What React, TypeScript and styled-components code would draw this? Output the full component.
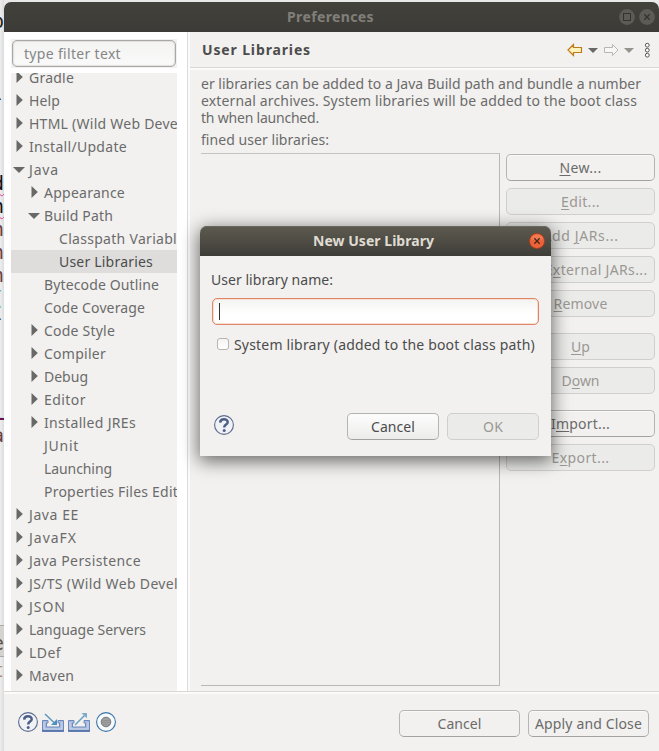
import React, { useLayoutEffect, useRef, useState } from "react";
import styled, { createGlobalStyle, css } from "styled-components";

const Global = createGlobalStyle`
  * { box-sizing: border-box; }
  html, body { margin: 0; background: #e9e9e9; overflow: hidden; }
  body { font: 14px/23px "Noto Sans", sans-serif; color: #6b6b6b; }
  button, input { font: inherit; color: inherit; margin: 0; }
`;

const FitSpan = styled.span`
  display: inline-block;
  white-space: pre;
`;

/* Tracks the text so that it takes exactly the given width. */
function Fit({ w, children }: { w: number; children: React.ReactNode }) {
  const ref = useRef<HTMLSpanElement>(null);
  const [spacing, setSpacing] = useState(0);
  useLayoutEffect(() => {
    const el = ref.current;
    if (!el) return;
    const n = el.textContent?.length ?? 1;
    setSpacing((s) => s + (w - el.getBoundingClientRect().width) / n);
  }, [w]);
  return (
    <FitSpan ref={ref} style={{ letterSpacing: spacing }}>
      {children}
    </FitSpan>
  );
}

const Screen = styled.div`
  position: relative;
  width: 659px;
  height: 751px;
  display: grid;
  grid-template-columns: 4px 655px;
  overflow: hidden;
`;

const Editor = styled.div`
  position: relative;
  overflow: hidden;
  background: linear-gradient(90deg, #eeeeee, #dcdcdc);
`;

const Glyph = styled.span<{ $y: number; $c: string; $wavy?: boolean }>`
  position: absolute;
  right: 0;
  top: ${(p) => p.$y - 12}px;
  font: 19px/24px "DejaVu Sans Mono", monospace;
  color: ${(p) => p.$c};
  ${(p) => p.$wavy && css`text-decoration: underline wavy #e0409a 1px; text-underline-offset: 2px;`}
`;

const Underline = styled.span`
  position: absolute;
  left: 0;
  top: 418px;
  width: 4px;
  height: 2px;
  background: #6d1255;
`;

const TabEdge = styled.span`
  position: absolute;
  left: 0;
  top: 625px;
  width: 4px;
  height: 32px;
  background: #d5d3d0;
  border: solid #aaa;
  border-width: 1px 0;
`;

const Window = styled.main`
  margin-top: 2px;
  height: 749px;
  display: grid;
  grid-template-rows: 30px 659px 60px;
  background: #f2f1ef;
  border-radius: 7px 7px 0 0;
  overflow: hidden;
`;

const TitleBar = styled.header<{ $active?: boolean }>`
  position: relative;
  height: 30px;
  display: flex;
  align-items: center;
  justify-content: center;
  padding: 0 2px 2px 0;
  font-weight: 700;
  ${(p) =>
    p.$active
      ? css`color: #dfdbd2; padding-right: 4px; background: linear-gradient(#5d5b50, #3f3d38); border-radius: 7px 7px 0 0; box-shadow: inset 0 1px #6b695f;`
      : css`color: #817f79; background: linear-gradient(#42413b, #3c3b37);`}
`;

const Controls = styled.div<{ $right: number }>`
  position: absolute;
  right: ${(p) => p.$right}px;
  top: 7px;
  display: flex;
  gap: 4px;
  svg { display: block; }
`;

const Body = styled.div`
  display: grid;
  grid-template-columns: 183px 1px 2px 1fr;
  min-height: 0;
`;

const Sidebar = styled.aside`
  background: #fff;
  padding: 7px 6px 0 7px;
  display: flex;
  flex-direction: column;
  gap: 5px;
  min-width: 0;
  min-height: 0;
`;

const FilterWrap = styled.div`
  background: #f2f1ef;
  height: 29px;
  padding: 1px;
  width: 166px;
`;

const Filter = styled.div`
  height: 27px;
  width: 164px;
  border: 1px solid #aaa8a5;
  border-radius: 5px;
  background: linear-gradient(#f3f3f2, #fafafa);
  box-shadow: inset 0 0 1px 1px #e1e0de;
  padding-left: 11px;
  line-height: 26px;
  color: #868686;
`;

const Tree = styled.div`
  width: 166px;
  flex: 1;
  min-height: 0;
  overflow: hidden;
  background: #f2f1ef;
`;

const Rows = styled.div`
  margin-top: -7px;
`;

const Row = styled.div<{ $depth: number; $selected?: boolean }>`
  height: 23px;
  display: flex;
  align-items: center;
  padding-left: ${(p) => 2 + p.$depth * 15}px;
  white-space: nowrap;
  ${(p) => p.$selected && css`background: #dedddb; color: #4c4c4c;`}
`;

const ArrowBox = styled.span`
  width: 16px;
  height: 23px;
  flex: none;
  svg { display: block; }
`;

const Divider = styled.div`
  background: #dcdbd9;
`;

const Gutter = styled.div`
  background: #fbfbfb;
`;

const Page = styled.section`
  display: flex;
  flex-direction: column;
  min-width: 0;
`;

const PageHead = styled.div`
  height: 36px;
  display: flex;
  align-items: center;
  justify-content: space-between;
  padding: 0 7px 0 12px;
  border-bottom: 1px solid #d9d8d6;
  box-shadow: 0 2px #fbfbfb;
  color: #4c4c4c;
  font-weight: 700;
  svg { display: block; }
`;

const PageBody = styled.div`
  padding: 7px 0 0 11px;
  line-height: 17px;
`;

const Intro = styled.div`
  display: flex;
  flex-direction: column;
  align-items: flex-start;
  height: 56px;
`;

const ListLabel = styled.div`
  height: 22px;
`;

const Columns = styled.div`
  display: flex;
  gap: 6px;
`;

const ListBox = styled.div`
  width: 299px;
  height: 533px;
  border: 1px solid #b9b8b6;
  border-left: 0;
  border-top-color: #c4c3c1;
`;

const ButtonColumn = styled.div`
  display: flex;
  flex-direction: column;
  gap: 7px;
  padding-top: 1px;
`;

const Button = styled.button<{ $w: number; $top?: number; $bright?: boolean }>`
  width: ${(p) => p.$w}px;
  height: 27px;
  flex: none;
  padding: 0;
  margin-top: ${(p) => p.$top ?? 0}px;
  border: 1px solid #b6b5b3;
  border-bottom-color: #a3a2a0;
  border-radius: 5px;
  background: ${(p) => (p.$bright ? "linear-gradient(#fdfdfd, #ececeb)" : "#f2f1ef")};
  box-shadow: inset 0 1px #f9f9f8;
  line-height: 25px;
  white-space: nowrap;
  color: ${(p) => (p.$bright ? "#4c4c4c" : "#6b6b6b")};
  u { text-underline-offset: 2px; text-decoration-thickness: 1px; }
  &:disabled {
    color: #9b9893;
    background: #ebebea;
    border-color: #d0cfce;
    box-shadow: none;
  }
`;

const Footer = styled.footer`
  border-top: 1px solid #d9d8d6;
  box-shadow: inset 0 2px #fbfbfb;
  display: flex;
  align-items: center;
  padding: 3px 10px 0 13px;
  gap: 8px;
`;

const FooterIcons = styled.div`
  display: flex;
  margin: -2px auto 0 0;
  svg { display: block; }
  svg + svg { margin-left: 1px; }
`;

const Dialog = styled.section`
  position: absolute;
  left: 200px;
  top: 226px;
  width: 351px;
  height: 230px;
  background: #f2f1ef;
  color: #4c4c4c;
  border-radius: 7px 7px 0 0;
  box-shadow: 0 4px 18px 1px rgba(0, 0, 0, 0.58);
`;

const DialogBody = styled.div`
  padding: 12px 12px 0 11px;
`;

const NameInput = styled.div`
  margin: 7px 0 0 1px;
  height: 27px;
  border: 1px solid #dd8764;
  border-radius: 5px;
  background: linear-gradient(#f3f3f2, #fff 60%);
  box-shadow: inset 0 0 0 1px #f8ded4;
  padding: 4px 6px;
`;

const Caret = styled.div`
  width: 1px;
  height: 17px;
  background: #333;
`;

const CheckRow = styled.label`
  display: flex;
  align-items: center;
  gap: 5px;
  height: 23px;
  margin: 8px 0 0 6px;
`;

const CheckBox = styled.span`
  width: 12px;
  height: 12px;
  margin-top: -1px;
  border: 1px solid #b5b4b2;
  border-radius: 3px;
  background: linear-gradient(#f4f4f4, #fff);
`;

const DialogActions = styled.div`
  margin-top: 57px;
  display: flex;
  align-items: center;
  gap: 8px;
  padding-left: 2px;
  svg { display: block; margin: -3px auto 0 0; }
`;

const HelpIcon = () => (
  <svg width="22" height="22" viewBox="0 0 22 22">
    <circle cx="11" cy="11" r="9.4" fill="#f0f2f5" stroke="#5a6b8f" strokeWidth="1.1" />
    <path d="M7.2 8.6C7.3 4.1 14.9 4.3 14.7 8.2C14.6 10.6 11.2 10.7 11.2 13.4" fill="none" stroke="#4d5f87" strokeWidth="2.5" />
    <circle cx="11.2" cy="16.5" r="1.5" fill="#4d5f87" />
  </svg>
);

const TrayIcon = ({ out }: { out?: boolean }) => (
  <svg width="25" height="22" viewBox="0 0 25 22">
    <path d="M2.5 9.5H8V12H6.5V16H19.5V12H18V9.5H23.5V20.5H2.5Z" fill="#a9bbdc" stroke="#6c89bd" />
    <path d="M2 19.8H24" stroke="#5977ad" strokeWidth="1.6" />
    <path d="M4 11V18H22V11" fill="none" stroke="#d0dbee" strokeWidth=".8" />
    {out ? (
      <g fill="none" stroke="#659fc5" strokeWidth="1.4">
        <path d="M9 14L20 3" />
        <path d="M15.5 2H21V7.5Z" fill="#7baecd" stroke="none" />
      </g>
    ) : (
      <g fill="none" stroke="#5795c1" strokeWidth="1.4">
        <path d="M5 3L15 12.5" />
        <path d="M17 8V14H11Z" fill="#4d90bd" stroke="none" />
      </g>
    )}
  </svg>
);

const RecordIcon = () => (
  <svg width="24" height="22" viewBox="0 0 24 22">
    <circle cx="14" cy="11" r="9.4" fill="#f6fbff" stroke="#3b73a6" strokeWidth="1.1" />
    <circle cx="14" cy="11" r="4.8" fill="#a0a0a0" stroke="#777" />
    <path d="M10.5 9.5H17.5M10 11.5H18M11 13.5H17" stroke="#8c8c8c" strokeWidth=".7" />
  </svg>
);

const NavIcons = () => (
  <svg width="90" height="20" viewBox="562 40 90 20">
    <path d="M568 50L573.5 44.5V47.5H581.5V52.5H573.5V55.5Z" fill="#fff2bd" stroke="#bd7c1b" strokeWidth="1.2" />
    <path d="M588 48H598L593 53Z" fill="#686866" />
    <path d="M618 50L612.5 44.5V47.5H604.5V52.5H612.5V55.5Z" fill="#f7f7f7" stroke="#b6b6b6" />
    <path d="M624 48H634L629 53Z" fill="#96938d" />
    <g fill="#fff" stroke="#555">
      <circle cx="647.3" cy="45.2" r="1.9" />
      <circle cx="647.3" cy="50.2" r="1.9" />
      <circle cx="647.3" cy="55.2" r="1.9" />
    </g>
  </svg>
);

const CloseIcon = ({ active }: { active?: boolean }) => (
  <svg width="16" height="16" viewBox="0 0 16 16">
    <circle cx="8" cy="8" r="7.9" fill={active ? "#b6401b" : "#5c5b55"} />
    {active && <circle cx="8" cy="8" r="7.1" fill="#ed6238" />}
    {active && <path d="M1.7 6A6.7 6.7 0 0 1 14.3 6Q8 8.5 1.7 6Z" fill="#f07b55" />}
    <path d="M5.3 5.3L10.7 10.7M10.7 5.3L5.3 10.7" stroke={active ? "#47261a" : "#34332f"} strokeWidth="1.3" />
  </svg>
);

const MaxIcon = () => (
  <svg width="16" height="16" viewBox="0 0 16 16">
    <circle cx="8" cy="8" r="7.9" fill="#5c5b55" />
    <rect x="4.5" y="4.5" width="7" height="7" fill="none" stroke="#34332f" />
  </svg>
);

const Arrow = ({ open }: { open?: boolean }) => (
  <svg width="16" height="23" viewBox="0 0 16 23">
    <path d={open ? "M0 9H12L6 15Z" : "M3.5 5V17L9.8 11Z"} fill="#686866" />
  </svg>
);

type Node = [label: string, width: number, depth: number, state?: "open" | "closed"];
const nodes: Node[] = [
  ["Gradle", 45, 0, "closed"],
  ["Help", 31, 0, "closed"],
  ["HTML (Wild Web Deve", 149, 0, "closed"],
  ["Install/Update", 98, 0, "closed"],
  ["Java", 30, 0, "open"],
  ["Appearance", 81, 1, "closed"],
  ["Build Path", 69, 1, "open"],
  ["Classpath Variabl", 118, 2],
  ["User Libraries", 94, 2],
  ["Bytecode Outline", 115, 1],
  ["Code Coverage", 101, 1],
  ["Code Style", 71, 1, "closed"],
  ["Compiler", 62, 1, "closed"],
  ["Debug", 44, 1, "closed"],
  ["Editor", 42, 1, "closed"],
  ["Installed JREs", 92, 1, "closed"],
  ["JUnit", 35, 1],
  ["Launching", 68, 1],
  ["Properties Files Edit", 134, 1],
  ["Java EE", 50, 0, "closed"],
  ["JavaFX", 48, 0, "closed"],
  ["Java Persistence", 112, 0, "closed"],
  ["JS/TS (Wild Web Devel", 149, 0, "closed"],
  ["JSON", 37, 0, "closed"],
  ["Language Servers", 117, 0, "closed"],
  ["LDef", 32, 0, "closed"],
  ["Maven", 45, 0, "closed"],
];

export default function App() {
  return (
    <>
      <Global />
      <Screen>
        <Editor>
          <Glyph $y={21} $c="#222">p</Glyph>
          <Glyph $y={98} $c="#222">-</Glyph>
          <Glyph $y={183} $c="#111" $wavy>d</Glyph>
          <Glyph $y={206} $c="#111" $wavy>n</Glyph>
          <Glyph $y={229} $c="#6a4040">n</Glyph>
          <Glyph $y={252} $c="#6a4040">n</Glyph>
          <Glyph $y={275} $c="#6a4040">n</Glyph>
          <Glyph $y={298} $c="#1682b5">(</Glyph>
          <Glyph $y={318} $c="#333">-</Glyph>
          <Glyph $y={412} $c="#8a8ae0">i</Glyph>
          <Underline />
          <Glyph $y={435} $c="#6a4040">a</Glyph>
          <TabEdge />
          <Glyph $y={643} $c="#5f5146">e</Glyph>
          <Glyph $y={670} $c="#b08c70">t</Glyph>
        </Editor>
        <Window>
          <TitleBar>
            <Fit w={87}>Preferences</Fit>
            <Controls $right={4}>
              <MaxIcon />
              <CloseIcon />
            </Controls>
          </TitleBar>
          <Body>
            <Sidebar>
              <FilterWrap>
                <Filter><Fit w={97}>type filter text</Fit></Filter>
              </FilterWrap>
              <Tree>
                <Rows>
                  {nodes.map(([label, width, depth, state]) => (
                    <Row key={label} $depth={depth} $selected={label === "User Libraries"}>
                      <ArrowBox>{state && <Arrow open={state === "open"} />}</ArrowBox>
                      <Fit w={width}>{label}</Fit>
                    </Row>
                  ))}
                </Rows>
              </Tree>
            </Sidebar>
            <Divider />
            <Gutter />
            <Page>
              <PageHead>
                <Fit w={109}>User Libraries</Fit>
                <NavIcons />
              </PageHead>
              <PageBody>
                <Intro>
                  <Fit w={440}>er libraries can be added to a Java Build path and bundle a number</Fit>
                  <Fit w={436}>external archives. System libraries will be added to the boot class</Fit>
                  <Fit w={118}>th when launched.</Fit>
                </Intro>
                <ListLabel><Fit w={128}>fined user libraries:</Fit></ListLabel>
                <Columns>
                  <ListBox />
                  <ButtonColumn>
                    <Button $w={149}><Fit w={42}><u>N</u>ew...</Fit></Button>
                    <Button $w={149} disabled><Fit w={39}><u>E</u>dit...</Fit></Button>
                    <Button $w={149} disabled><Fit w={76}>Add <u>J</u>ARs...</Fit></Button>
                    <Button $w={149} disabled><Fit w={134}>Add E<u>x</u>ternal JARs...</Fit></Button>
                    <Button $w={149} disabled><Fit w={54}><u>R</u>emove</Fit></Button>
                    <Button $w={149} $top={9} disabled><Fit w={19}><u>U</u>p</Fit></Button>
                    <Button $w={149} disabled><Fit w={38}>D<u>o</u>wn</Fit></Button>
                    <Button $w={149} $top={9}><Fit w={59}>I<u>m</u>port...</Fit></Button>
                    <Button $w={149} disabled><Fit w={58}>E<u>x</u>port...</Fit></Button>
                  </ButtonColumn>
                </Columns>
              </PageBody>
            </Page>
          </Body>
          <Footer>
            <FooterIcons>
              <HelpIcon />
              <TrayIcon />
              <TrayIcon out />
              <RecordIcon />
            </FooterIcons>
            <Button $w={121}><Fit w={44}>Cancel</Fit></Button>
            <Button $w={121}><Fit w={107}>Apply and Close</Fit></Button>
          </Footer>
        </Window>
        <Dialog>
          <TitleBar $active>
            <Fit w={121}>New User Library</Fit>
            <Controls $right={6}><CloseIcon active /></Controls>
          </TitleBar>
          <DialogBody>
            <Fit w={122}>User library name:</Fit>
            <NameInput><Caret /></NameInput>
            <CheckRow>
              <CheckBox />
              <Fit w={301}>System library (added to the boot class path)</Fit>
            </CheckRow>
            <DialogActions>
              <HelpIcon />
              <Button $w={92} $bright><Fit w={44}>Cancel</Fit></Button>
              <Button $w={92} disabled><Fit w={20}>OK</Fit></Button>
            </DialogActions>
          </DialogBody>
        </Dialog>
      </Screen>
    </>
  );
}
